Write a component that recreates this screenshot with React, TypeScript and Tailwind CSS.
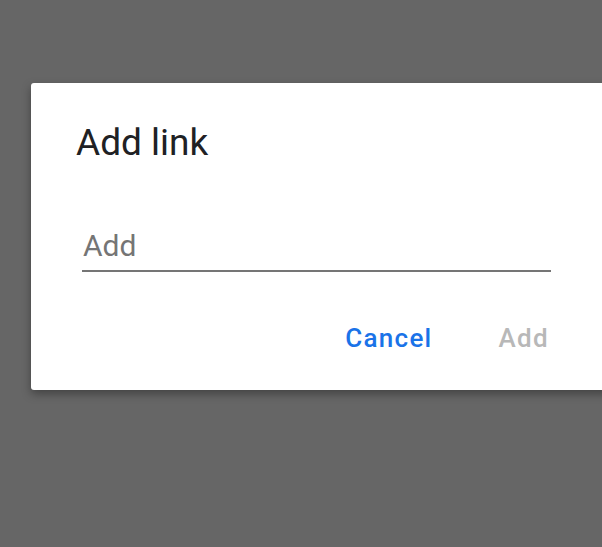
import { useState } from 'react';

export default function App() {
  const [link, setLink] = useState('');

  return (
    <div className="w-[602px] h-[547px] overflow-hidden bg-[#666666] pt-[83px] pl-[31px] font-['Roboto',sans-serif]">
      {/* Dialog */}
      <div className="w-[580px] h-[307px] bg-white rounded-[3px] shadow-[0_4px_10px_rgba(0,0,0,0.35)] pt-[41px]">
        <h1 className="pl-[45px] text-[37px] leading-[37px] text-[#202124] font-normal">Add link</h1>

        <div className="mt-[69px] ml-[51px] w-[469px]">
          <input
            value={link}
            onChange={(e) => setLink(e.target.value)}
            placeholder="Add"
            className="w-full pl-[1px] pb-[10px] text-[30px] leading-[30px] h-[42px] text-[#202124] placeholder:text-[#757575] border-b-2 border-[#757575] outline-none bg-transparent font-['Roboto',sans-serif]"
          />
        </div>

        <div className="mt-[53px] flex justify-end items-center gap-[66px] pr-[62px]">
          <button className="text-[26px] leading-[26px] font-medium text-[#1a73e8] tracking-[1.3px]">Cancel</button>
          <button disabled className="text-[26px] leading-[26px] font-medium text-[#b8b8b8] tracking-[1.3px]">
            Add
          </button>
        </div>
      </div>
    </div>
  );
}
